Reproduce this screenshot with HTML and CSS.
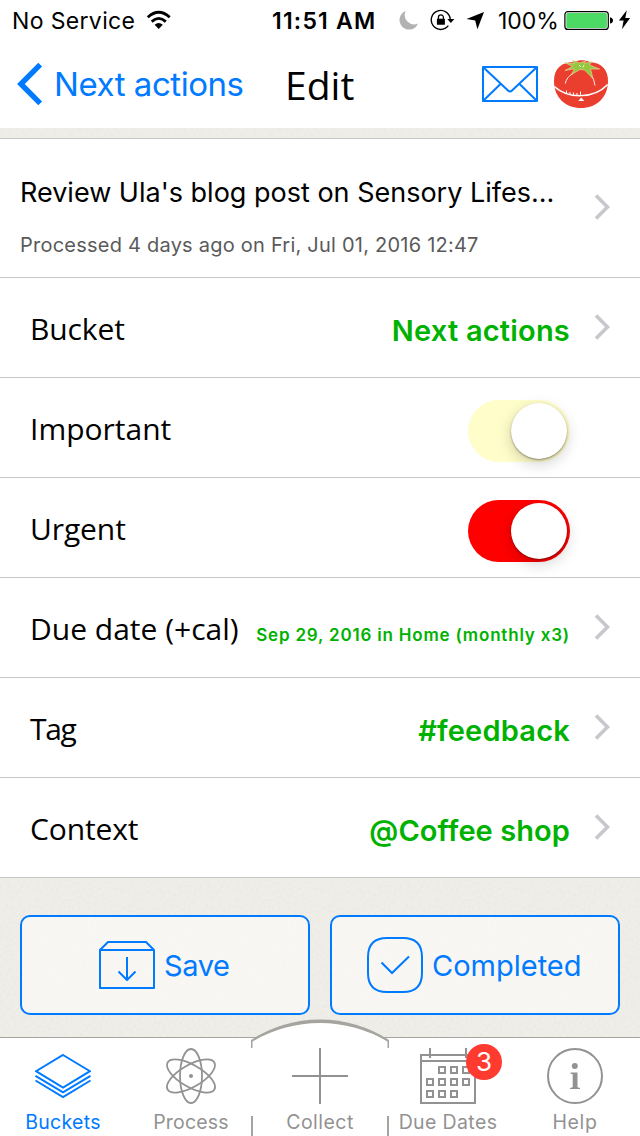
FILE: index.html
```html
<!DOCTYPE html>
<html lang="en">
<head>
<meta charset="utf-8">
<title>Edit</title>
<link rel="stylesheet" href="styles.css">
</head>
<body>
<svg class="defs" width="0" height="0"><defs>
  <symbol id="chev" viewBox="0 0 16 28"><path d="M2 2.500 13.500 14 2 25.500" fill="none" stroke="#c7c7cc" stroke-width="3.600"/></symbol>
</defs></svg>
<div class="screen">
  <header class="status">
    <div class="status-left">
      <span class="carrier">No Service</span>
      <svg class="wifi" width="26" height="25" viewBox="0 0 26 25"><g fill="none" stroke="#000" stroke-width="2.800"><path d="M1.800 9.300Q12.700-.7 23.700 9.300"/><path d="M5.700 13.600Q12.700 7.200 19.800 13.600"/></g><path d="M8.600 16.800Q12.700 13.300 16.800 16.800L12.700 20.900Z"/></svg>
    </div>
    <span class="time">11:51 AM</span>
    <svg class="moon" width="22" height="25" viewBox="0 0 22 25"><path d="M7.700 3A9.600 9.600 0 1 0 20 15.600A9.400 9.400 0 0 1 7.700 3Z" fill="#b2b2b2"/></svg>
    <svg class="lock" width="26" height="25" viewBox="0 0 26 25"><path d="M20.200 11A9.500 9.500 0 1 0 18.300 17.700" fill="none" stroke="#000" stroke-width="1.400"/><path d="M17.300 11H24.300L20.800 15Z"/><rect x="6.900" y="10.800" width="8" height="6" rx=".6"/><path d="M8.400 11V9.400a2.500 2.500 0 0 1 5 0V11" fill="none" stroke="#000" stroke-width="1.300"/></svg>
    <svg class="arrow" width="22" height="25" viewBox="0 0 22 25"><path d="M2.500 11 20 4 13.400 21.300 11.200 12.500Z"/></svg>
    <span class="pct">100%</span>
    <svg class="battery" width="50" height="25" viewBox="0 0 50 25"><rect x=".9" y="3.600" width="43.400" height="17.800" rx="3" fill="#fff" stroke="#000" stroke-width="1.200"/><rect x="2.300" y="5" width="40.600" height="15" rx="1.500" fill="#4cd964"/><path d="M46 9.200Q49 10 49 12.400T46 15.600Z"/></svg>
    <svg class="bolt" width="13" height="25" viewBox="0 0 13 25"><path d="M8.800 2.300.9 12.400H5.600L4 21.200 12.100 10.100H7.300Z"/></svg>
  </header>

  <nav class="nav">
    <div class="back">
      <svg width="28" height="49" viewBox="0 0 28 49"><path d="M25.200 4.700 5.900 24 25.200 43.300" fill="none" stroke="#007aff" stroke-width="5.400"/></svg>
      <span class="back-text">Next actions</span>
    </div>
    <h1 class="title">Edit</h1>
    <svg class="mail" width="56" height="49" viewBox="0 0 56 49"><g fill="none" stroke="#007aff" stroke-width="2" stroke-linejoin="round"><rect x="1" y="7" width="54" height="34"/><path d="M1 7 26 30.500Q28 32.500 30 30.500L55 7M1 41 18.500 24M55 41 37.500 24"/></g></svg>
    <svg class="tomato" width="54" height="49" viewBox="0 0 54 49">
      <path d="M0 21C0 8 8 2 20 2C25-.4 31-.4 36 2C48 3 54 10 54 21C54 38 42 48 27 48S0 38 0 21Z" fill="#ea3f2e"/>
      <path d="M.4 26.500C14 39 40 39 53.600 24.500" fill="none" stroke="#fff" stroke-width="1.500"/>
      <path d="M12.500 33.500V30.500M16 34.500V32M19.500 35.200V32.500M23 35.700V33M26.500 36V31.500" stroke="#fff" stroke-width="1"/>
      <path d="M11.200 23.500Q13 16.500 19 13.500M41 25.500Q40.500 18.500 36 14.500" fill="none" stroke="#fff" stroke-width=".9"/>
      <path d="M24.300 41H30.300L27.300 37.500Z" fill="#fff"/>
      <path d="M10.500 2.500 20.500 3.800 18 0 25.500 3 31.500 1 30.500 3.500 38 1.500 35.500 5 45.500 9 36.500 9 39 18.500 30.500 10 26 9.500 17.500 14.500 20.500 8.800 11 10.500 18.500 6.500Z" fill="#93c83e" stroke="#f6d9b0" stroke-width=".6"/>
      <path d="M25 5 27 7M30 5 29 7.500" stroke="#fff" stroke-width=".8"/>
    </svg>
  </nav>

  <main class="content">
    <section class="list">
      <div class="item item-main">
        <div class="item-text">
          <div class="item-title">Review Ula's blog post on Sensory Lifes...</div>
          <div class="item-sub">Processed 4 days ago on Fri, Jul 01, 2016 12:47</div>
        </div>
        <svg class="chev"><use href="#chev"/></svg>
      </div>
      <div class="item"><span class="label bucket">Bucket</span><span class="value next">Next actions</span><svg class="chev"><use href="#chev"/></svg></div>
      <div class="item"><span class="label">Important</span><span class="switch important"><i class="knob"></i></span></div>
      <div class="item"><span class="label urgent-label">Urgent</span><span class="switch urgent"><i class="knob"></i></span></div>
      <div class="item"><span class="label">Due date (+cal)</span><span class="value small">Sep 29, 2016 in Home (monthly x3)</span><svg class="chev"><use href="#chev"/></svg></div>
      <div class="item"><span class="label tag">Tag</span><span class="value feedback">#feedback</span><svg class="chev"><use href="#chev"/></svg></div>
      <div class="item"><span class="label context">Context</span><span class="value shop">@Coffee shop</span><svg class="chev"><use href="#chev"/></svg></div>
    </section>
    <div class="actions">
      <button class="btn save">
        <svg width="56" height="56" viewBox="0 0 56 56"><g fill="none" stroke="#007aff" stroke-width="2" stroke-linejoin="round"><path d="M1 13 9 5H47L55 13V51H1ZM1 13H55"/><path d="M28 20V42.500M19.500 34.500 28 43 36.500 34.500"/></g></svg>
        <span class="btn-text save-text">Save</span>
      </button>
      <button class="btn completed">
        <svg width="56" height="56" viewBox="0 0 56 56"><g fill="none" stroke="#007aff" stroke-width="2"><path d="M20 1H36C49 1 55 7 55 20V36C55 49 49 55 36 55H20C7 55 1 49 1 36V20C1 7 7 1 20 1Z"/><path d="M14.500 25.500 25 36 42 19.500"/></g></svg>
        <span class="btn-text">Completed</span>
      </button>
    </div>
  </main>

  <footer class="tabs">
    <svg class="arch" width="140" height="119" viewBox="0 0 140 119">
      <path d="M1 22A127 127 0 0 1 139 22V30H1Z" fill="#a5a49f"/>
      <path d="M2.500 23.500A133 133 0 0 1 137.500 23.500V119H2.500Z" fill="#fff"/>
      <path d="M0 30H4V119H0ZM136.500 30H140V119H136.500Z" fill="#fff"/>
      <path d="M2 98V119M138 98V119" stroke="#a5a49f" stroke-width="2"/>
    </svg>
    <div class="tab active">
      <svg width="56" height="56" viewBox="0 0 56 56"><g fill="none" stroke="#007aff" stroke-width="2"><path d="M28 7 55 23.200 28 39.500 1 23.200Z"/><path d="M.5 27.800 28 44.300 55.500 27.800M.5 32.500 28 49 55.500 32.500"/></g></svg>
      <span class="tab-label buckets">Buckets</span>
    </div>
    <div class="tab">
      <svg width="56" height="56" viewBox="0 0 56 56"><g fill="none" stroke="#929292" stroke-width="1.800"><ellipse cx="28" cy="28" rx="11" ry="27"/><ellipse cx="28" cy="28" rx="11" ry="27" transform="rotate(60 28 28)"/><ellipse cx="28" cy="28" rx="11" ry="27" transform="rotate(-60 28 28)"/></g><circle cx="28" cy="28" r="2" fill="#929292"/></svg>
      <span class="tab-label process">Process</span>
    </div>
    <div class="tab">
      <svg width="56" height="56" viewBox="0 0 56 56"><path d="M28 0V56M0 28H56" stroke="#929292" stroke-width="2"/></svg>
      <span class="tab-label collect">Collect</span>
    </div>
    <div class="tab">
      <svg width="56" height="56" viewBox="0 0 56 56"><g fill="none" stroke="#929292" stroke-width="2"><path d="M1 7H55V55H1ZM1 13H55M10 0V10M46 0V10"/><path d="M19 19h6v6h-6zM31 19h6v6h-6zM43 19h6v6h-6zM7 31h6v6h-6zM19 31h6v6h-6zM31 31h6v6h-6zM43 31h6v6h-6zM7 43h6v6h-6zM19 43h6v6h-6zM31 43h6v6h-6z"/></g></svg>
      <span class="badge">3</span>
      <span class="tab-label dates">Due Dates</span>
    </div>
    <div class="tab">
      <svg width="56" height="56" viewBox="0 0 56 56"><circle cx="28" cy="28" r="27" fill="none" stroke="#929292" stroke-width="2"/><circle cx="27.800" cy="18" r="3" fill="#929292"/><path d="M23.500 24.500H30.500V39.200L33 40V41H23V40L25.700 39.200V26.200L23.500 25.500Z" fill="#929292"/></svg>
      <span class="tab-label help">Help</span>
    </div>
  </footer>
</div>
</body>
</html>
```
FILE: styles.css
```css
* { box-sizing: border-box; }
body { margin: 0; background: #fff; font-family: Inter, "Liberation Sans", sans-serif; color: #000; }
svg { display: block; flex: none; }
.defs { position: absolute; }
.screen { width: 640px; height: 1136px; display: flex; flex-direction: column; overflow: hidden; white-space: nowrap; }

.status { height: 41px; display: flex; align-items: center; font-size: 23px; line-height: 41px; flex: none; }
.status span { padding-top: 2px; }
.status-left { width: 272px; padding-left: 12px; display: flex; align-items: center; }
.carrier { width: 134px; letter-spacing: .35px; }
.time { width: 110px; font-weight: 600; letter-spacing: 1.2px; }
.moon { margin-left: 16px; }
.lock { margin-left: 10px; }
.arrow { margin-left: 8px; }
.pct { width: 61px; margin-left: 12px; }
.battery { margin-left: 5px; }
.bolt { margin-left: 4px; }

.nav { height: 87px; display: flex; align-items: center; flex: none; }
.back { width: 286px; padding-left: 15px; display: flex; align-items: center; gap: 11px; color: #007aff; }
.back-text { font-size: 33px; line-height: 84px; padding-bottom: 2px; letter-spacing: -.45px; }
.title { margin: 0 0 0 -1px; width: 197px; font: 400 39px/85px "Open Sans", "Noto Sans", sans-serif; padding-bottom: 1px; }
.tomato { margin-left: 16px; }

.content {
  height: 909px;
  flex: none;
  padding-top: 10px;
  background: #efeee9 url("data:image/svg+xml,%3Csvg xmlns='http://www.w3.org/2000/svg' width='200' height='200'%3E%3Cfilter id='n'%3E%3CfeTurbulence type='fractalNoise' baseFrequency='.35' numOctaves='3' stitchTiles='stitch'/%3E%3CfeColorMatrix values='0 0 0 0 .42 0 0 0 0 .4 0 0 0 0 .3 .16 0 0 0 -.06'/%3E%3C/filter%3E%3Crect width='200' height='200' filter='url(%23n)'/%3E%3C/svg%3E");
}
.list { background: #fff; border-top: 1px solid #c8c7cc; }
.item { height: 100px; padding: 0 30px; display: flex; align-items: center; border-bottom: 1px solid #c8c8c8; }
.item-main { height: 139px; padding-left: 20px; }
.item-text { flex: 1; display: flex; flex-direction: column; gap: 14px; padding-top: 18px; }
.item-title { font-size: 27px; line-height: 42px; }
.item-sub { font-size: 20px; line-height: 34px; letter-spacing: .23px; color: #5a5a5a; }
.chev { width: 16px; height: 28px; margin-left: 24px; margin-bottom: 1px; }
.item-main .chev { margin-bottom: 3px; }
.label { font: 400 30px/41px "Open Sans", "Noto Sans", sans-serif; padding-top: 2px; }
.bucket { letter-spacing: -.1px; }
.urgent-label { letter-spacing: -.1px; }
.tag { letter-spacing: -1.3px; }
.context { letter-spacing: -.15px; }
.value { margin-left: auto; padding-top: 6px; font-size: 29px; line-height: 40px; font-weight: 600; color: #00b200; }
.next { letter-spacing: .2px; }
.feedback { letter-spacing: .2px; }
.shop { letter-spacing: .08px; }
.small { padding-top: 14px; font-size: 17px; letter-spacing: .81px; }
.switch { width: 102px; height: 62px; margin: 7px 40px 0 auto; padding: 3px; border-radius: 31px; display: flex; justify-content: flex-end; }
.important { background: #fffdc9; }
.urgent { background: #f00; }
.knob { width: 56px; height: 56px; border-radius: 50%; background: #fff; box-shadow: 0 1px 2px rgba(0,0,0,.4), 0 5px 15px rgba(0,0,0,.18); }

.actions { display: grid; grid-template-columns: 1fr 1fr; gap: 20px; padding: 37px 20px 0; }
.btn { height: 100px; padding: 0; display: flex; align-items: center; gap: 9px; border: 2px solid #007aff; border-radius: 10px; background: rgba(255,254,252,.6); color: #007aff; font: 400 29px/40px Inter, "Liberation Sans", sans-serif; }
.btn-text { padding-top: 2px; }
.save { padding-left: 77px; }
.save-text { letter-spacing: -.4px; }
.completed { padding-left: 35px; }

.tabs { position: relative; height: 99px; flex: none; display: grid; grid-template-columns: 126px 130px 128px 128px 126px; border-top: 1px solid #a5a49f; background: #fff; }
.arch { position: absolute; left: 250px; top: -20px; }
.tab { position: relative; display: flex; flex-direction: column; align-items: center; gap: 6px; padding-top: 10px; color: #929292; }
.active { color: #007aff; }
.tab-label { font-size: 19.5px; line-height: 24px; }
.buckets { letter-spacing: .29px; }
.process { letter-spacing: .21px; }
.collect { letter-spacing: .47px; }
.dates { letter-spacing: .37px; }
.help { letter-spacing: .64px; }
.badge { position: absolute; left: 82px; top: 6px; width: 36px; height: 36px; border-radius: 50%; background: #ff3b30; color: #fff; font-size: 26px; line-height: 36px; text-align: center; }
```
